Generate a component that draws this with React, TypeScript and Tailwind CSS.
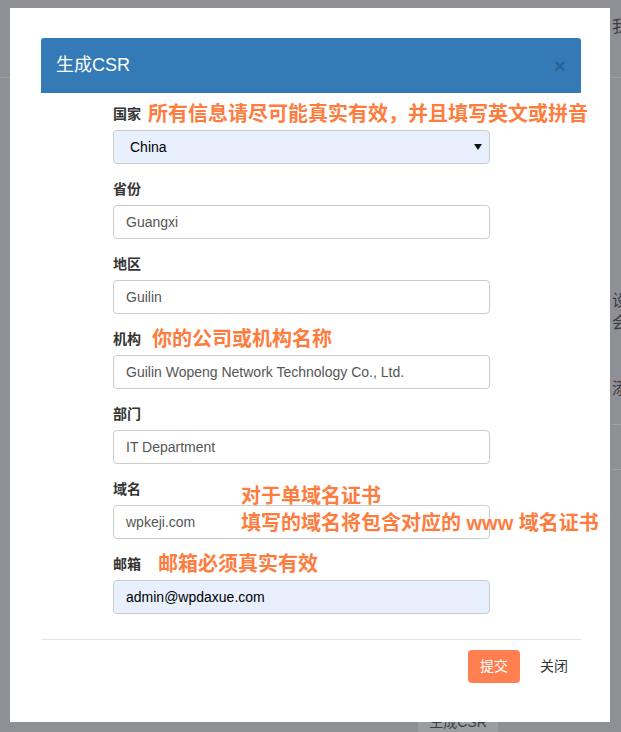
import React from "react";

const font = { fontFamily: '"Liberation Sans", "Noto Sans CJK SC", sans-serif' };

interface Field {
  label: string;
  value: string;
  filled?: boolean;
  select?: boolean;
  note?: string;
  noteGap?: string;
}

const fields: Field[] = [
  { label: "国家", value: "China", filled: true, select: true, note: "所有信息请尽可能真实有效，并且填写英文或拼音", noteGap: "ml-[7px]" },
  { label: "省份", value: "Guangxi" },
  { label: "地区", value: "Guilin" },
  { label: "机构", value: "Guilin Wopeng Network Technology Co., Ltd.", note: "你的公司或机构名称", noteGap: "ml-[11px]" },
  { label: "部门", value: "IT Department" },
  { label: "域名", value: "wpkeji.com" },
  { label: "邮箱", value: "admin@wpdaxue.com", filled: true, note: "邮箱必须真实有效", noteGap: "ml-[17px]" },
];

const FormGroup = ({ f }: { f: Field }) => {
  return (
    <div className="relative mb-[15px]">
      <div className="flex h-[21px] items-center mb-[5px]">
        <span className="shrink-0 whitespace-nowrap text-[14px] font-bold text-[#333]">{f.label}</span>
        {f.note && (
          <span className={`${f.noteGap} shrink-0 text-[20px] font-bold leading-[21px] text-[#fd7c3e] whitespace-nowrap`}>
            {f.note}
          </span>
        )}
      </div>
      <div
        className={`flex h-[34px] w-[377px] items-center rounded-[4px] border border-[#ccc] text-[14px] ${
          f.filled ? "bg-[#e8f0fe] text-black" : "bg-white text-[#555]"
        } ${f.select ? "pl-[16px] pr-[7px] justify-between" : "px-[12px]"}`}
      >
        <span>{f.value}</span>
        {f.select && (
          <svg width="8" height="6" viewBox="0 0 8 6">
            <path d="M0 0 H8 L4 6 Z" fill="#111" />
          </svg>
        )}
      </div>
      {f.label === "域名" && (
        // overlay note painted over the input
        <div className="absolute left-[128px] top-[4px] text-[20px] font-bold leading-[27px] text-[#fd7c3e] whitespace-nowrap">
          <div>对于单域名证书</div>
          <div>填写的域名将包含对应的 www 域名证书</div>
        </div>
      )}
    </div>
  );
};

export default function App() {
  return (
    <div className="relative w-[621px] h-[732px] overflow-hidden bg-[#8f9095]" style={font}>
      {/* page behind the backdrop */}
      <div className="flex flex-col text-[16px] text-[#3c3d44]">
        <div className="ml-[612px] mt-[17px] leading-[20px]">我</div>
        <div className="mt-[40px] h-px bg-[#9fa0a4]" />
        <div className="ml-[612px] mt-[212px] leading-[22px]">设</div>
        <div className="ml-[612px] leading-[22px]">会</div>
        <div className="ml-[612px] mt-[44px] leading-[22px]">添</div>
        <div className="mt-[24px] ml-[612px] h-px bg-[#a0a1a5]" />
        <div className="mt-[44px] ml-[612px] h-px bg-[#a0a1a5]" />
        <div className="ml-[418px] mt-[240px] w-[80px] h-[24px] bg-[#9c9da1] text-center text-[14px] leading-[24px]">
          生成CSR
        </div>
      </div>

      {/* modal */}
      <div className="absolute left-[10px] top-[8px] w-[600px] h-[714px] bg-white pl-[31px] pr-[29px] pt-[30px]">
        <div className="flex h-[55px] items-center justify-between rounded-t-[3px] bg-[#337ab7] pl-[15px] pr-[15px]">
          <span className="text-[18px] text-white">生成CSR</span>
          <span className="text-[21px] font-bold leading-none text-black/20">×</span>
        </div>
        <div className="pl-[72px] pt-[11px] pb-[10px]">
          {fields.map((f) => (
            <FormGroup key={f.label} f={f} />
          ))}
        </div>
        <div className="flex items-center justify-end border-t border-[#e5e5e5] pt-[10px] pr-[13px]">
          <button className="h-[33px] rounded-[4px] bg-[#ff7f50] px-[12px] text-[14px] text-white">提交</button>
          <button className="ml-[20px] h-[33px] text-[14px] text-[#333]">关闭</button>
        </div>
      </div>
    </div>
  );
}
